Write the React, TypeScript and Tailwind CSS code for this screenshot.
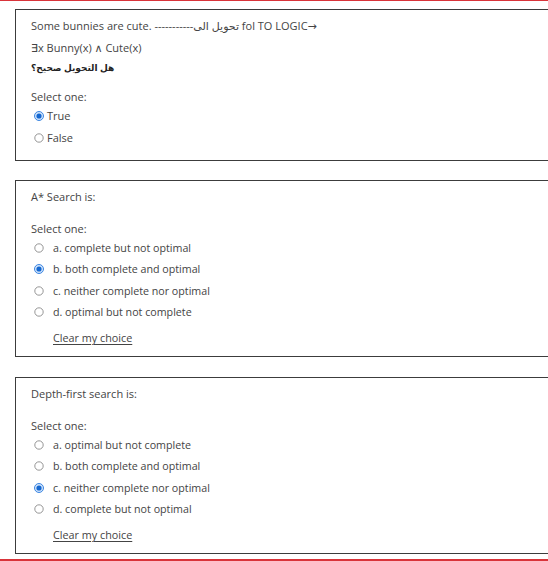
import React from 'react';

type Opt = { label: string; checked?: boolean };

function Radio({ checked }: { checked?: boolean }) {
  return (
    <svg width="10" height="10" viewBox="0 0 10 10" className="shrink-0">
      {checked ? (
        <>
          <circle cx="5" cy="5" r="4.5" fill="#cfe3fb" stroke="#3d86e0" strokeWidth="1" />
          <circle cx="5" cy="5" r="2.6" fill="#1467d0" />
        </>
      ) : (
        <circle cx="5" cy="5" r="4.2" fill="#fff" stroke="#8a8a8a" strokeWidth="0.9" />
      )}
    </svg>
  );
}

function Question({ text, options }: { text: string; options: Opt[] }) {
  return (
    <div className="w-[560px] border border-[#3c3c3c] pl-[15px] pt-[5px] pb-[7px]">
      <div className="leading-[22px]">{text}</div>
      <div className="mt-[13px] leading-[16px]">Select one:</div>
      <div>
        {options.map((o) => (
          <div key={o.label} className="flex h-[21.5px] items-center pl-[3px]">
            <Radio checked={o.checked} />
            <span className="ml-[9px] text-[10.7px]">{o.label}</span>
          </div>
        ))}
      </div>
      <div className="mt-[4px] pl-[22px] leading-[22px]">
        <span className="underline underline-offset-2 text-[10.8px]">Clear my choice</span>
      </div>
    </div>
  );
}

export default function App() {
  return (
    <div
      className="w-[548px] h-[561px] overflow-hidden bg-white text-[11px] text-[#444]"
      style={{ fontFamily: '"Open Sans", "DejaVu Sans", sans-serif' }}
    >
      <div className="h-px bg-[#d9343a]" />

      <div className="ml-[15px] mt-[8px]">
        {/* Question 1 */}
        <div className="w-[560px] h-[152px] border border-[#3c3c3c] pl-[15px] pt-[5px]">
          <div className="leading-[22px]">
            Some bunnies are cute. -----------تحويل الى fol TO LOGIC→
          </div>
          <div className="leading-[21px]">∃x Bunny(x) ∧ Cute(x)</div>
          <div className="leading-[20px] text-[9px] font-bold text-[#222]">
            <span dir="rtl">هل التحويل صحيح؟</span>
          </div>
          <div className="mt-[11px] leading-[16px]">Select one:</div>
          <div className="flex h-[22px] items-center pl-[3px]">
            <Radio checked />
            <span className="ml-[3px]">True</span>
          </div>
          <div className="flex h-[22px] items-center pl-[3px]">
            <Radio />
            <span className="ml-[3px]">False</span>
          </div>
        </div>

        <div className="h-[19px]" />

        <Question
          text="A* Search is:"
          options={[
            { label: 'a. complete but not optimal' },
            { label: 'b. both complete and optimal', checked: true },
            { label: 'c. neither complete nor optimal' },
            { label: 'd. optimal but not complete' },
          ]}
        />

        <div className="h-[20px]" />

        <Question
          text="Depth-first search is:"
          options={[
            { label: 'a. optimal but not complete' },
            { label: 'b. both complete and optimal' },
            { label: 'c. neither complete nor optimal', checked: true },
            { label: 'd. complete but not optimal' },
          ]}
        />
      </div>

      <div className="mt-[5px] h-[2px] bg-[#d9343a]" />
    </div>
  );
}
